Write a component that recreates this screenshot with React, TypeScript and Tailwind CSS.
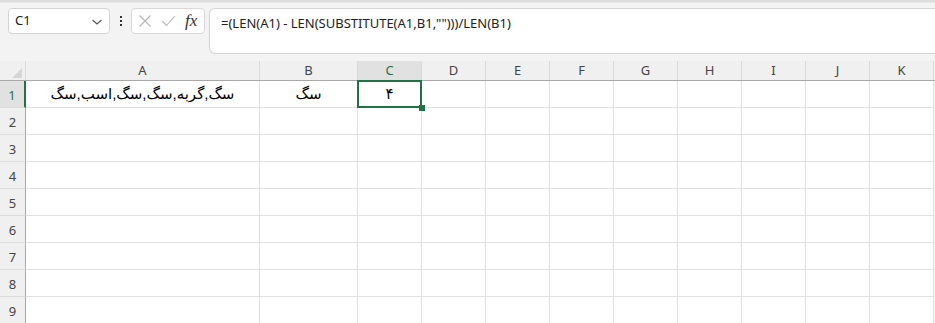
import React from "react";

const cols = ["A", "B", "C", "D", "E", "F", "G", "H", "I", "J", "K"];
const widths = ["w-[234px]", "w-[98px]", "w-[64px]", "w-[64px]", "w-[64px]", "w-[64px]", "w-[64px]", "w-[64px]", "w-[64px]", "w-[64px]", "w-[64px]"];

const uiFont = { fontFamily: "'Noto Sans', 'Open Sans', sans-serif" };
const cellFont = { fontFamily: "'Liberation Sans', 'DejaVu Sans', sans-serif" };

function Row({ n }: { n: number }) {
  const sel = n === 1;
  return (
    <div className="flex h-[27px] shrink-0">
      <div
        className={`w-[26px] shrink-0 h-full flex items-center justify-center text-[13px] border-b border-[#dcdcdc] ${
          sel ? "bg-[#e1e1e1] text-[#217346] border-r-2 border-r-[#217346]" : "bg-[#f0f0f0] text-[#444] border-r border-r-[#a8a8a8]"
        }`}
        style={uiFont}
      >
        <span className="pt-[3px]">{n}</span>
      </div>
      {cols.map((c, i) => (
        <div
          key={c}
          className={`${widths[i]} shrink-0 h-full bg-white border-r border-b border-[#e1e1e1] relative flex items-center justify-center text-[15px] text-black ${
            sel && c === "C" ? "z-10" : ""
          }`}
          style={cellFont}
        >
          {sel && c === "A" && <span>سگ,گربه,سگ,سگ,اسب,سگ</span>}
          {sel && c === "B" && <span>سگ</span>}
          {sel && c === "C" && (
            <>
              <span>۴</span>
              <div className="absolute -top-[1px] -left-[1px] w-[65px] h-[28px] border-2 border-[#217346]" />
              <div className="absolute right-[-4px] bottom-[-4px] w-[6px] h-[6px] bg-[#217346]" />
            </>
          )}
        </div>
      ))}
    </div>
  );
}

export default function App() {
  return (
    <div className="w-[935px] h-[323px] bg-[#f3f3f3] overflow-hidden flex flex-col relative" style={uiFont}>
      <div className="h-[2px] bg-[#dcdcdc] shrink-0" />
      <div className="h-[1px] bg-[#e8e8e8] shrink-0" />
      <div className="flex items-start pt-[5px] pl-[8px] h-[51px] shrink-0">
        <div className="w-[102px] h-[26px] bg-white border border-[#d4d4d4] rounded-[4px] flex items-center justify-between pl-[6px] pr-[6px] shrink-0">
          <span className="text-[13px] text-[#222]">C1</span>
          <svg width="12" height="8" viewBox="0 0 12 8" className="mt-[1px]">
            <path d="M1.5 2 L6 6 L10.5 2" fill="none" stroke="#555" strokeWidth="1.2" />
          </svg>
        </div>
        <div className="w-[21px] h-[26px] flex flex-col items-center justify-center gap-[2px] shrink-0">
          <div className="w-[2px] h-[2px] bg-[#333]" />
          <div className="w-[2px] h-[2px] bg-[#333]" />
          <div className="w-[2px] h-[2px] bg-[#333]" />
        </div>
        <div className="w-[74px] h-[26px] bg-white border border-[#d8d8d8] rounded-[4px] flex items-center pl-[6px] gap-[9px] shrink-0">
          <svg width="14" height="14" viewBox="0 0 14 14">
            <path d="M1.5 1.5 L12.5 12.5 M12.5 1.5 L1.5 12.5" stroke="#b5b5b5" strokeWidth="1.1" fill="none" />
          </svg>
          <svg width="15" height="12" viewBox="0 0 15 12">
            <path d="M1 6 L5.5 10.5 L14 1" stroke="#b5b5b5" strokeWidth="1.1" fill="none" />
          </svg>
          <span
            className="text-[17px] italic text-[#333] leading-none -mt-[2px]"
            style={{ fontFamily: "'Liberation Serif', 'DejaVu Serif', serif" }}
          >
            fx
          </span>
        </div>
        <div className="ml-[4px] flex-1 h-[46px] bg-white border border-[#d4d4d4] border-r-0 rounded-tl-[6px] rounded-bl-[6px] pl-[11px] pt-[5px] text-[13px] text-[#222]">
          =(LEN(A1) - LEN(SUBSTITUTE(A1,B1,"")))/LEN(B1)
        </div>
      </div>
      <div className="h-[7px] shrink-0" />
      <div className="flex h-[20px] shrink-0 bg-[#f0f0f0] border-b border-[#a9a9a9]">
        <div className="w-[26px] shrink-0 h-full relative border-r border-[#dadada]">
          <svg width="10" height="10" viewBox="0 0 10 10" className="absolute right-[3px] bottom-[2px]">
            <path d="M10 0 L10 10 L0 10 Z" fill="#d6d6d6" />
          </svg>
        </div>
        {cols.map((c, i) => (
          <div
            key={c}
            className={`${widths[i]} shrink-0 h-full border-r border-[#dadada] flex items-center justify-center text-[13px] ${
              c === "C" ? "bg-[#e1e1e1] text-[#217346]" : "text-[#444]"
            }`}
          >
            {c}
          </div>
        ))}
      </div>
      {[1, 2, 3, 4, 5, 6, 7, 8, 9].map((n) => (
        <Row key={n} n={n} />
      ))}
    </div>
  );
}
